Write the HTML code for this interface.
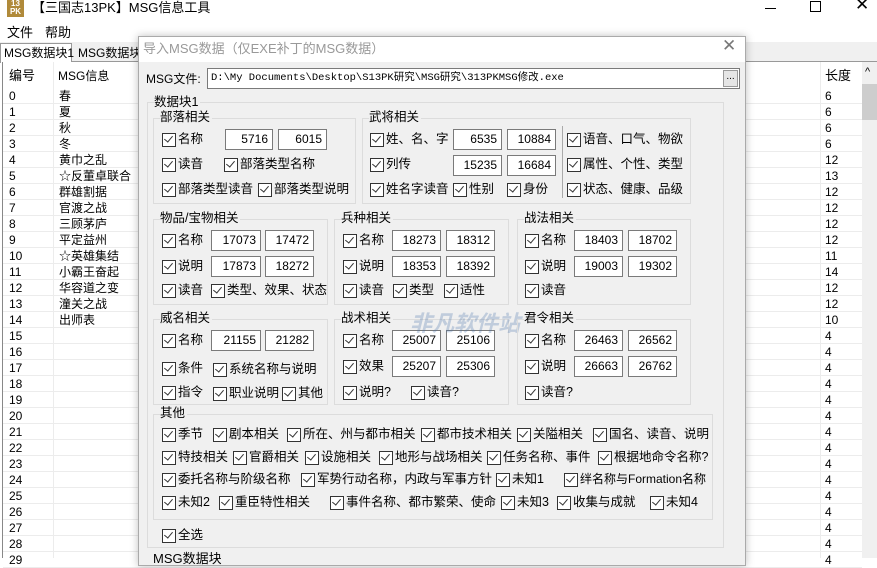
<!DOCTYPE html>
<html><head><meta charset="utf-8"><style>
*{margin:0;padding:0;box-sizing:border-box}
body{width:877px;height:558px;overflow:hidden;background:#fff;position:relative;font-family:"Liberation Sans","Noto Sans CJK SC",sans-serif;font-size:13px;color:#000}
.a{position:absolute;white-space:nowrap;line-height:16px}
.c{position:absolute;white-space:nowrap;line-height:16px;padding-left:16px;font-size:12.5px}
.c::before{content:'';position:absolute;left:0;top:2px;width:12px;height:12px;border:1px solid #333;background:#fff}
.c::after{content:'';position:absolute;left:4px;top:3px;width:4px;height:7px;border:solid #333;border-width:0 1.3px 1.3px 0;transform:rotate(40deg)}
.in{position:absolute;height:21px;background:#fff;border:1px solid #7a7a7a;text-align:right;padding-right:4px;line-height:19px;font-family:"Liberation Sans",sans-serif;font-size:12px}
.g{position:absolute;border:1px solid #dcdcdc}
.gl{position:absolute;background:#f0f0f0;line-height:16px;white-space:nowrap;padding-right:2px;font-size:12.5px}
.row{position:absolute;left:3px;width:859px;height:16px;border-bottom:1px solid #ececec;font-size:12px;line-height:16px}
.row span{position:absolute}
</style></head><body>
<div class="a" style="left:7px;top:0;width:17px;height:17px;background:#b08a3a;color:#fff;font-size:8px;line-height:8px;text-align:center;font-weight:bold">13<br>PK</div>
<div class="a" style="left:32px;top:0;font-size:13px">【三国志13PK】MSG信息工具</div>
<div style="position:absolute;left:765px;top:8px;width:11px;height:1px;background:#000"></div>
<div class="a" style="left:810px;top:1px;width:11px;height:11px;border:1px solid #000"></div>
<div class="a" style="left:855px;top:-3px;font-size:17px">✕</div>
<div class="a" style="left:7px;top:25px">文件</div>
<div class="a" style="left:45px;top:25px">帮助</div>
<div style="position:absolute;left:0;top:42px;width:877px;height:20px;background:#f0f0f0;border-bottom:1px solid #999"></div>
<div class="a" style="left:0;top:43px;width:72px;height:20px;background:#fff;border:1px solid #999;border-bottom:none;font-size:12px;padding-left:3px;line-height:18px">MSG数据块1</div>
<div class="a" style="left:78px;top:45px;font-size:12px;line-height:16px">MSG数据块</div>
<div style="position:absolute;left:2px;top:62px;width:860px;height:496px;border-left:1px solid #888;background:#fff"></div>
<div style="position:absolute;left:53px;top:62px;width:1px;height:496px;background:#ececec"></div>
<div style="position:absolute;left:820px;top:62px;width:1px;height:496px;background:#ececec"></div>
<div style="position:absolute;left:862px;top:62px;width:15px;height:496px;background:#f0f0f0"></div>
<div style="position:absolute;left:862px;top:84px;width:15px;height:36px;background:#cdcdcd"></div>
<div class="a" style="left:865px;top:64px;font-size:11px">^</div>
<div class="a" style="left:9px;top:68px">编号</div>
<div class="a" style="left:58px;top:68px;font-size:12px">MSG信息</div>
<div class="a" style="left:825px;top:68px">长度</div>
<div id="rows"></div>
<script>
var m=["春","夏","秋","冬","黄巾之乱","☆反董卓联合","群雄割据","官渡之战","三顾茅庐","平定益州","☆英雄集结","小霸王奋起","华容道之变","潼关之战","出师表"];
var l=[6,6,6,6,12,13,12,12,12,12,11,14,12,12,10];
var h="";for(var i=0;i<30;i++){h+='<div class="row" style="top:'+(88+i*16)+'px"><span style="left:6px">'+i+'</span><span style="left:56px">'+(m[i]||"")+'</span><span style="left:822px">'+(l[i]||4)+'</span></div>'}
document.getElementById("rows").innerHTML=h;
</script>
<div style="position:absolute;left:138px;top:36px;width:608px;height:530px;background:#f0f0f0;border:1px solid #aaa;box-shadow:0 0 8px rgba(0,0,0,.25)"></div>
<div style="position:absolute;left:139px;top:37px;width:606px;height:25px;background:#fff"></div>
<div class="a" style="left:143px;top:41px;color:#999">导入MSG数据（仅EXE补丁的MSG数据）</div>
<div class="a" style="left:722px;top:38px;color:#777;font-size:17px">✕</div>
<div class="a" style="left:146px;top:71px;font-size:12px">MSG文件:</div>
<div class="a" style="left:207px;top:68px;width:533px;height:21px;background:#fff;border:1px solid #7a7a7a;font-family:'Liberation Mono','Noto Sans CJK SC',monospace;font-size:10.5px;line-height:19px;padding-left:3px">D:\My Documents\Desktop\S13PK研究\MSG研究\313PKMSG修改.exe</div>
<div class="a" style="left:723px;top:70px;width:15px;height:17px;background:#e5e5e5;border:1px solid #999;font-size:10px;text-align:center;line-height:12px">...</div>

<div class="g" style="left:147px;top:102px;width:577px;height:446px"></div>
<div class="gl" style="left:154px;top:94px">数据块1</div>

<div class="g" style="left:153px;top:118px;width:203px;height:86px"></div>
<div class="gl" style="left:160px;top:109px">部落相关</div>
<div class="c" style="left:162px;top:131px">名称</div>
<div class="in" style="left:225px;top:129px;width:48px">5716</div>
<div class="in" style="left:278px;top:129px;width:49px">6015</div>
<div class="c" style="left:162px;top:156px">读音</div>
<div class="c" style="left:224px;top:156px">部落类型名称</div>
<div class="c" style="left:162px;top:181px">部落类型读音</div>
<div class="c" style="left:258px;top:181px">部落类型说明</div>

<div class="g" style="left:362px;top:118px;width:329px;height:86px"></div>
<div class="gl" style="left:369px;top:109px">武将相关</div>
<div style="position:absolute;left:562px;top:126px;width:1px;height:72px;background:#aaa"></div>
<div class="c" style="left:370px;top:131px">姓、名、字</div>
<div class="in" style="left:453px;top:129px;width:49px">6535</div>
<div class="in" style="left:507px;top:129px;width:49px">10884</div>
<div class="c" style="left:370px;top:156px">列传</div>
<div class="in" style="left:453px;top:155px;width:49px">15235</div>
<div class="in" style="left:507px;top:155px;width:49px">16684</div>
<div class="c" style="left:370px;top:181px">姓名字读音</div>
<div class="c" style="left:453px;top:181px">性别</div>
<div class="c" style="left:507px;top:181px">身份</div>
<div class="c" style="left:567px;top:131px">语音、口气、物欲</div>
<div class="c" style="left:567px;top:156px">属性、个性、类型</div>
<div class="c" style="left:567px;top:181px">状态、健康、品级</div>

<div class="g" style="left:153px;top:219px;width:175px;height:86px"></div>
<div class="gl" style="left:160px;top:210px">物品/宝物相关</div>
<div class="c" style="left:162px;top:232px">名称</div>
<div class="in" style="left:211px;top:230px;width:50px">17073</div>
<div class="in" style="left:265px;top:230px;width:49px">17472</div>
<div class="c" style="left:162px;top:258px">说明</div>
<div class="in" style="left:211px;top:256px;width:50px">17873</div>
<div class="in" style="left:265px;top:256px;width:49px">18272</div>
<div class="c" style="left:162px;top:282px">读音</div>
<div class="c" style="left:211px;top:282px">类型、效果、状态</div>

<div class="g" style="left:334px;top:219px;width:175px;height:86px"></div>
<div class="gl" style="left:341px;top:210px">兵种相关</div>
<div class="c" style="left:343px;top:232px">名称</div>
<div class="in" style="left:392px;top:230px;width:49px">18273</div>
<div class="in" style="left:446px;top:230px;width:49px">18312</div>
<div class="c" style="left:343px;top:258px">说明</div>
<div class="in" style="left:392px;top:256px;width:49px">18353</div>
<div class="in" style="left:446px;top:256px;width:49px">18392</div>
<div class="c" style="left:343px;top:282px">读音</div>
<div class="c" style="left:393px;top:282px">类型</div>
<div class="c" style="left:444px;top:282px">适性</div>

<div class="g" style="left:517px;top:219px;width:174px;height:86px"></div>
<div class="gl" style="left:524px;top:210px">战法相关</div>
<div class="c" style="left:525px;top:232px">名称</div>
<div class="in" style="left:574px;top:230px;width:49px">18403</div>
<div class="in" style="left:628px;top:230px;width:49px">18702</div>
<div class="c" style="left:525px;top:258px">说明</div>
<div class="in" style="left:574px;top:256px;width:49px">19003</div>
<div class="in" style="left:628px;top:256px;width:49px">19302</div>
<div class="c" style="left:525px;top:282px">读音</div>

<div class="g" style="left:153px;top:319px;width:175px;height:86px"></div>
<div class="gl" style="left:160px;top:310px">威名相关</div>
<div class="c" style="left:162px;top:332px">名称</div>
<div class="in" style="left:211px;top:330px;width:50px">21155</div>
<div class="in" style="left:265px;top:330px;width:49px">21282</div>
<div class="c" style="left:162px;top:360px">条件</div>
<div class="c" style="left:213px;top:361px">系统名称与说明</div>
<div class="c" style="left:162px;top:384px">指令</div>
<div class="c" style="left:213px;top:385px">职业说明</div>
<div class="c" style="left:282px;top:385px">其他</div>

<div class="g" style="left:334px;top:319px;width:175px;height:86px"></div>
<div class="gl" style="left:341px;top:310px">战术相关</div>
<div class="c" style="left:343px;top:332px">名称</div>
<div class="in" style="left:392px;top:330px;width:49px">25007</div>
<div class="in" style="left:446px;top:330px;width:49px">25106</div>
<div class="c" style="left:343px;top:358px">效果</div>
<div class="in" style="left:392px;top:356px;width:49px">25207</div>
<div class="in" style="left:446px;top:356px;width:49px">25306</div>
<div class="c" style="left:343px;top:384px">说明?</div>
<div class="c" style="left:411px;top:384px">读音?</div>
<div class="a" style="left:410px;top:316px;font-size:22px;font-style:italic;font-weight:bold;color:rgba(70,110,170,.28)">非凡软件站</div>

<div class="g" style="left:517px;top:319px;width:174px;height:86px"></div>
<div class="gl" style="left:524px;top:310px">君令相关</div>
<div class="c" style="left:525px;top:332px">名称</div>
<div class="in" style="left:574px;top:330px;width:49px">26463</div>
<div class="in" style="left:628px;top:330px;width:49px">26562</div>
<div class="c" style="left:525px;top:358px">说明</div>
<div class="in" style="left:574px;top:356px;width:49px">26663</div>
<div class="in" style="left:628px;top:356px;width:49px">26762</div>
<div class="c" style="left:525px;top:384px">读音?</div>

<div class="g" style="left:153px;top:414px;width:560px;height:106px"></div>
<div class="gl" style="left:160px;top:405px">其他</div>
<div class="c" style="left:162px;top:426px">季节</div>
<div class="c" style="left:213px;top:426px">剧本相关</div>
<div class="c" style="left:287px;top:426px">所在、州与都市相关</div>
<div class="c" style="left:421px;top:426px">都市技术相关</div>
<div class="c" style="left:517px;top:426px">关隘相关</div>
<div class="c" style="left:593px;top:426px">国名、读音、说明</div>
<div class="c" style="left:162px;top:449px">特技相关</div>
<div class="c" style="left:233px;top:449px">官爵相关</div>
<div class="c" style="left:305px;top:449px">设施相关</div>
<div class="c" style="left:379px;top:449px">地形与战场相关</div>
<div class="c" style="left:487px;top:449px">任务名称、事件</div>
<div class="c" style="left:598px;top:449px">根据地命令名称?</div>
<div class="c" style="left:162px;top:471px">委托名称与阶级名称</div>
<div class="c" style="left:301px;top:471px">军势行动名称，内政与军事方针</div>
<div class="c" style="left:496px;top:471px">未知1</div>
<div class="c" style="left:564px;top:471px;font-size:12px">绊名称与Formation名称</div>
<div class="c" style="left:162px;top:494px">未知2</div>
<div class="c" style="left:219px;top:494px">重臣特性相关</div>
<div class="c" style="left:330px;top:494px">事件名称、都市繁荣、使命</div>
<div class="c" style="left:501px;top:494px">未知3</div>
<div class="c" style="left:557px;top:494px">收集与成就</div>
<div class="c" style="left:650px;top:494px">未知4</div>
<div class="c" style="left:162px;top:527px">全选</div>
<div class="a" style="left:153px;top:551px">MSG数据块</div>
</body></html>
